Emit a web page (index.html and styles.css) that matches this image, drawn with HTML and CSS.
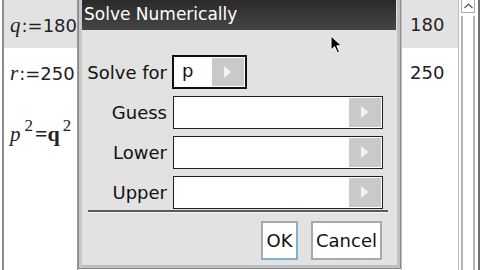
FILE: index.html
```html
<!DOCTYPE html>
<html lang="en">

<head>
    <meta charset="UTF-8">
    <title>Solve Numerically</title>
    <link rel="stylesheet" href="styles.css">
</head>

<body>
    <div class="screen">
        <div class="left-panel">
            <div class="row selected"><i class="mvar">q</i>:=180</div>
            <div class="row"><i class="mvar">r</i>:=250</div>
            <div class="row math"><i class="mvar">p</i><sup>2</sup><b>=q</b><sup>2</sup></div>
        </div>

        <div class="dialog">
            <div class="title">Solve Numerically</div>
            <div class="dialog-body">
                <div class="field">
                    <label>Solve for</label>
                    <div class="combo small focus">
                        <span class="value">p</span>
                        <span class="arrow"></span>
                    </div>
                </div>
                <div class="field">
                    <label>Guess</label>
                    <div class="combo"><span class="value"></span><span class="arrow"></span></div>
                </div>
                <div class="field">
                    <label>Lower</label>
                    <div class="combo"><span class="value"></span><span class="arrow"></span></div>
                </div>
                <div class="field">
                    <label>Upper</label>
                    <div class="combo"><span class="value"></span><span class="arrow"></span></div>
                </div>
                <div class="separator"></div>
                <div class="buttons">
                    <button class="btn default">OK</button>
                    <button class="btn">Cancel</button>
                </div>
            </div>
        </div>

        <div class="right-panel">
            <div class="row selected">180</div>
            <div class="row">250</div>
        </div>

        <div class="scrollbar">
            <div class="up">
                <svg width="11" height="8" viewBox="0 0 11 8"><path d="M1.5 6 L5.5 2 L9.5 6" fill="none" stroke="#555" stroke-width="1.2"/></svg>
            </div>
            <div class="track"></div>
        </div>

        <svg class="cursor" width="14" height="20" viewBox="0 0 14 20">
            <path d="M1 1 L1 15 L4.5 11.5 L7.5 18 L9.5 17 L6.8 10.8 L11.5 10.8 Z" fill="#000" stroke="#fff" stroke-width="1"/>
        </svg>
    </div>
</body>

</html>
```

FILE: styles.css
```css
* {
    margin: 0;
    padding: 0;
    box-sizing: border-box;
}

body {
    width: 480px;
    height: 270px;
    overflow: hidden;
    background: #fff;
    font-family: "DejaVu Sans", sans-serif;
}

.screen {
    position: relative;
    display: grid;
    grid-template-columns: 78px 323px 57px 22px;
    height: 270px;
}

.left-panel {
    margin-left: 2px;
    border-left: 2px solid #8c8c8c;
    border-right: 1px solid #9a9a9a;
    font-size: 18px;
    color: #222;
    overflow: hidden;
}

.row {
    height: 48px;
    line-height: 50px;
    padding-left: 6px;
    white-space: nowrap;
}

.row.selected {
    background: #e2e2e2;
}

.mvar {
    font-family: "Liberation Serif", serif;
    font-size: 21px;
    margin-right: 1px;
}

.math {
    margin-top: 5px;
    font-family: "Liberation Serif", serif;
    font-size: 21px;
    padding-left: 6px;
}

.math sup {
    font-size: 17px;
    vertical-align: 10px;
    margin-left: 3px;
}

.math b {
    font-size: 22px;
    margin-left: 2px;
}

.dialog {
    background: #e2e2e2;
    border-left: 1px solid #8a8a8a;
    border-right: 1px solid #8a8a8a;
    border-bottom: 1px solid #8a8a8a;
    box-shadow: inset 3px 0 0 #c8c8c8, inset -3px 0 0 #c0c0c0, inset 0 -3px 0 #c0c0c0;
    display: flex;
    flex-direction: column;
    height: 269px;
}

.title {
    height: 30px;
    margin: 0 4px 0 3px;
    background: linear-gradient(#2a2a2a, #464646);
    color: #fff;
    font-size: 17px;
    line-height: 29px;
    padding-left: 2px;
}

.dialog-body {
    padding: 25px 0 0 6px;
    display: flex;
    flex-direction: column;
}

.field {
    display: flex;
    align-items: center;
    height: 34px;
    margin-bottom: 6px;
}

.field label {
    width: 88px;
    text-align: right;
    font-size: 18px;
    color: #111;
    padding-right: 6px;
}

.combo {
    display: flex;
    width: 210px;
    height: 33px;
    border: 1px solid #1e1e1e;
    background: #fff;
}

.combo.small {
    width: 75px;
    height: 34px;
    border: 2px solid #111;
    margin-left: -1px;
}

.combo .value {
    flex: 1;
    font-size: 18px;
    line-height: 28px;
    padding-left: 8px;
    color: #111;
}

.combo .arrow {
    width: 32px;
    margin: 1px 1px 1px 0;
    background: #c9c9c9;
    position: relative;
}

.combo .arrow::after {
    content: "";
    position: absolute;
    left: 12px;
    top: 50%;
    margin-top: -6px;
    border-left: 7px solid #f4f4f4;
    border-top: 6px solid transparent;
    border-bottom: 6px solid transparent;
}

.separator {
    margin: -5px 12px 0 3px;
    height: 3px;
    border-top: 2px solid #5a5a5a;
    border-bottom: 1px solid #f4f4f4;
}

.buttons {
    display: flex;
    justify-content: flex-end;
    gap: 13px;
    padding: 8px 18px 0 0;
}

.btn {
    height: 39px;
    background: #fff;
    border: 2px solid #a8a8a8;
    font-family: "DejaVu Sans", sans-serif;
    font-size: 18px;
    color: #111;
    padding: 0 3px;
}

.btn.default {
    width: 37px;
    border-right-color: #7fb0d0;
    border-bottom-color: #7fb0d0;
}

.right-panel {
    border-left: 1px solid #c0c0c0;
    font-size: 18px;
    color: #222;
}

.right-panel .row {
    padding-left: 8px;
}

.scrollbar {
    border-left: 1px solid #bdbdbd;
    padding: 0 3px 0 2px;
    border-right: 2px solid #707070;
    display: flex;
    flex-direction: column;
}

.scrollbar .up {
    height: 13px;
    border: 1px solid #aaa;
    border-top: none;
    display: flex;
    align-items: center;
    justify-content: center;
}

.scrollbar .track {
    flex: 1;
    margin: 3px 0 0;
    border-left: 2px solid #b5b5b5;
    border-right: 2px solid #b5b5b5;
}

.cursor {
    position: absolute;
    left: 330px;
    top: 35px;
}
```
